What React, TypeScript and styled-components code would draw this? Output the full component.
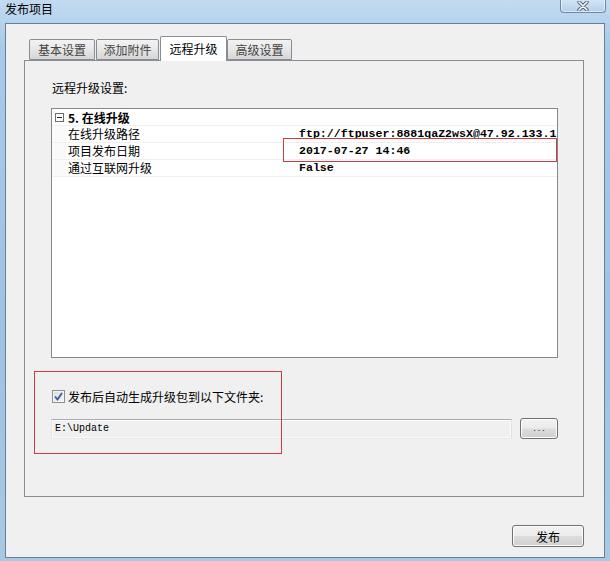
import React from 'react';
import styled, {createGlobalStyle} from 'styled-components';

const GlobalStyle = createGlobalStyle`
    * {
        box-sizing: border-box;
    }
    body {
        margin: 0;
        background: #a9c9e8;
        font-family: "Noto Sans CJK SC", "Liberation Sans", sans-serif;
        font-size: 12px;
        color: #000;
    }
`;

const Window = styled.div`
    width: 610px;
    height: 561px;
    display: flex;
    flex-direction: column;
    background: linear-gradient(180deg, #c3dbf1 0%, #a8cae9 8%, #9fc3e5 60%, #a9c8e2 100%);
    overflow: hidden;
`;

const TitleBar = styled.div`
    height: 23px;
    flex: none;
    display: flex;
    align-items: flex-start;
    justify-content: space-between;
    padding-left: 5px;
    padding-right: 4px;
`;

const Title = styled.div`
    font-size: 12px;
    line-height: 12px;
    padding-top: 3px;
    color: #000;
`;

const CloseButton = styled.div`
    width: 46px;
    height: 14px;
    margin-top: -1px;
    display: flex;
    align-items: center;
    justify-content: center;
    border: 1px solid #6f8aa6;
    border-top: none;
    border-radius: 0 0 4px 4px;
    background: linear-gradient(180deg, #d6e6f5 0%, #b3d0ec 100%);
    box-shadow: inset 0 0 0 1px rgba(255, 255, 255, 0.5);
`;

const Client = styled.div`
    flex: 1;
    margin: 0 5px 3px 5px;
    border: 1px solid #6b7f94;
    background: #f0f0f0;
    display: flex;
    flex-direction: column;
    padding: 12px 20px 0 18px;
`;

const TabStrip = styled.div`
    height: 24px;
    display: flex;
    align-items: flex-end;
    padding-left: 5px;
    position: relative;
    z-index: 1;
`;

const Tab = styled.div<{ $width: number; $gap: number; $active?: boolean }>`
    width: ${p => p.$width}px;
    margin-left: ${p => p.$gap}px;
    height: ${p => (p.$active ? 25 : 21)}px;
    margin-bottom: ${p => (p.$active ? -1 : 0)}px;
    border: 1px solid #898c95;
    border-bottom: ${p => (p.$active ? 'none' : '1px solid #898c95')};
    border-radius: 2px 2px 0 0;
    background: ${p => (p.$active ? '#ffffff' : 'linear-gradient(180deg, #f3f3f3 0%, #e8e8e8 45%, #d6d6d6 100%)')};
    color: ${p => (p.$active ? '#000' : '#444')};
    display: flex;
    align-items: ${p => (p.$active ? 'flex-start' : 'center')};
    padding-top: ${p => (p.$active ? 3 : 0)}px;
    justify-content: center;
    font-size: 12px;
`;

const Panel = styled.div`
    height: 437px;
    flex: none;
    border: 1px solid #898c95;
    background: #f0f0f0;
    display: flex;
    flex-direction: column;
    padding: 19px 25px 0 26px;
`;

const SectionLabel = styled.div`
    height: 16px;
    line-height: 16px;
    padding-left: 1px;
    color: #000;
`;

const PropertyGrid = styled.div`
    margin-top: 12px;
    height: 250px;
    border: 1px solid #828790;
    background: #ffffff;
    position: relative;
    overflow: hidden;
`;

const CategoryRow = styled.div`
    height: 17px;
    display: flex;
    align-items: center;
    padding-left: 3px;
    border-bottom: 1px solid #f0f0f0;
    font-weight: bold;
`;

const Expander = styled.div`
    width: 9px;
    height: 9px;
    border: 1px solid #6e6e6e;
    background: #fff;
    display: flex;
    align-items: center;
    justify-content: center;
    margin-right: 4px;

    &::after {
        content: "";
        width: 5px;
        height: 1px;
        background: #222;
    }
`;

const PropRow = styled.div`
    height: 17px;
    display: grid;
    grid-template-columns: 14px 232px 1fr;
    border-bottom: 1px solid #f0f0f0;
`;

const Margin = styled.div`
    background: #fafafa;
`;

const PropName = styled.div`
    padding-left: 2px;
    line-height: 16px;
    white-space: nowrap;
    color: #000;
`;

const PropValue = styled.div`
    padding-left: 1px;
    line-height: 16px;
    white-space: nowrap;
    overflow: hidden;
    font-family: "Liberation Mono", "DejaVu Sans Mono", monospace;
    font-weight: bold;
    font-size: 11.6px;
    color: #000;
`;

const Annotation = styled.div<{ $left: number; $top: number; $w: number; $h: number }>`
    position: absolute;
    left: ${p => p.$left}px;
    top: ${p => p.$top}px;
    width: ${p => p.$w}px;
    height: ${p => p.$h}px;
    border: 1px solid #cc3c44;
    pointer-events: none;
`;

const OutputSection = styled.div`
    margin-top: 13px;
    height: 82px;
    position: relative;
    display: flex;
    flex-direction: column;
    padding-top: 18px;
`;

const CheckRow = styled.label`
    display: flex;
    align-items: center;
    height: 14px;
    padding-left: 1px;
    gap: 3px;
`;

const CheckBox = styled.div`
    width: 13px;
    height: 13px;
    border: 1px solid #8e8f8f;
    background: linear-gradient(135deg, #dcdcdc 0%, #f7f7f7 100%);
    display: flex;
    align-items: center;
    justify-content: center;
    box-shadow: inset 0 0 0 1px #f4f4f4;
`;

const PathRow = styled.div`
    margin-top: 15px;
    display: flex;
    align-items: center;
`;

const PathBox = styled.div`
    width: 461px;
    height: 20px;
    border: 1px solid;
    border-color: #abadb3 #dbdfe6 #e3e9ef #e2e3ea;
    background: #f0f0f0;
    box-shadow: inset 0 0 0 1px #fafafa;
    padding-left: 3px;
    line-height: 18px;
    font-family: "Liberation Mono", "DejaVu Sans Mono", monospace;
    font-size: 10px;
    color: #000;
`;

const Button = styled.div<{ $width: number; $height: number }>`
    width: ${p => p.$width}px;
    height: ${p => p.$height}px;
    border: 1px solid #707070;
    border-radius: 3px;
    background: linear-gradient(180deg, #f2f2f2 0%, #ebebeb 48%, #dddddd 52%, #cfcfcf 100%);
    box-shadow: inset 0 0 0 1px #fcfcfc;
    display: flex;
    align-items: center;
    justify-content: center;
    font-size: 12px;
    color: #000;
`;

const BrowseButton = styled(Button)`
    margin-left: 8px;
    font-family: "Liberation Sans", sans-serif;
    font-size: 9px;
    letter-spacing: 2px;
    padding-left: 2px;
    padding-bottom: 1px;
`;

const Footer = styled.div`
    margin-top: 28px;
    display: flex;
    justify-content: flex-end;
`;

const props = [
    {name: '在线升级路径', value: 'ftp://ftpuser:8881qaZ2wsX@47.92.133.1'},
    {name: '项目发布日期', value: '2017-07-27 14:46'},
    {name: '通过互联网升级', value: 'False'},
];

const tabs = [
    {label: '基本设置', width: 66, gap: 0},
    {label: '添加附件', width: 63, gap: 1},
    {label: '远程升级', width: 67, gap: 1, active: true},
    {label: '高级设置', width: 65, gap: 0},
];

export default function App() {
    return (
        <>
            <GlobalStyle/>
            <Window>
                <TitleBar>
                    <Title>发布项目</Title>
                    <CloseButton>
                        <svg width="12" height="10" viewBox="0 0 12 10">
                            <path d="M2 1 L10 9 M10 1 L2 9" stroke="#4b5d73" strokeWidth="3.4" strokeLinecap="round"/>
                            <path d="M2 1 L10 9 M10 1 L2 9" stroke="#ffffff" strokeWidth="1.6" strokeLinecap="round"/>
                        </svg>
                    </CloseButton>
                </TitleBar>
                <Client>
                    <TabStrip>
                        {tabs.map(t => (
                            <Tab key={t.label} $width={t.width} $gap={t.gap} $active={t.active}>
                                {t.label}
                            </Tab>
                        ))}
                    </TabStrip>
                    <Panel>
                        <SectionLabel>远程升级设置:</SectionLabel>
                        <PropertyGrid>
                            <CategoryRow>
                                <Expander/>
                                5. 在线升级
                            </CategoryRow>
                            {props.map(p => (
                                <PropRow key={p.name}>
                                    <Margin/>
                                    <PropName>{p.name}</PropName>
                                    <PropValue>{p.value}</PropValue>
                                </PropRow>
                            ))}
                            <Annotation $left={231} $top={29} $w={274} $h={24}/>
                        </PropertyGrid>
                        <OutputSection>
                            <CheckRow>
                                <CheckBox>
                                    <svg width="9" height="9" viewBox="0 0 9 9">
                                        <path d="M1 4.5 L3.5 7.5 L8 1" fill="none" stroke="#3c5a9a" strokeWidth="1.8"/>
                                    </svg>
                                </CheckBox>
                                发布后自动生成升级包到以下文件夹:
                            </CheckRow>
                            <PathRow>
                                <PathBox>E:\Update</PathBox>
                                <BrowseButton $width={38} $height={21}>...</BrowseButton>
                            </PathRow>
                            <Annotation $left={-17} $top={0} $w={248} $h={83}/>
                        </OutputSection>
                    </Panel>
                    <Footer>
                        <Button $width={72} $height={22}>发布</Button>
                    </Footer>
                </Client>
            </Window>
        </>
    );
}
